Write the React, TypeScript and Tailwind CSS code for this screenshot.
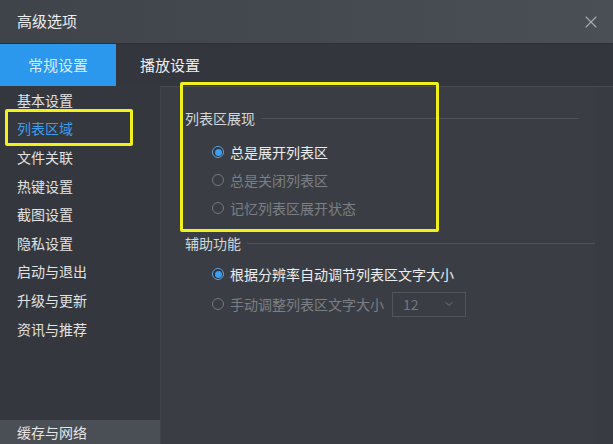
import { X, ChevronDown } from "lucide-react";

const menu = ["基本设置", "列表区域", "文件关联", "热键设置", "截图设置", "隐私设置", "启动与退出", "升级与更新", "资讯与推荐"];

function Radio({ on, label, dim }: { on?: boolean; label: string; dim?: boolean }) {
  return (
    <div className="flex h-[28px] items-center gap-[6px]">
      {on ? (
        <span className="grid size-[12px] place-items-center rounded-full border border-[#5aa7e8] bg-[#2e3238]"><span className="size-[7px] rounded-full bg-[#3d9ff0]" /></span>
      ) : (
        <span className="size-[12px] rounded-full border border-[#73777d]" />
      )}
      <span className={dim ? "text-[#7b7f85]" : "text-[#ececec]"}>{label}</span>
    </div>
  );
}

function Group({ title, line }: { title: string; line: string }) {
  return (
    <div className="flex h-[20px] items-center">
      <span className="text-[#d4d6d9]">{title}</span>
      <span className={`ml-[6px] h-px flex-1 bg-[#4d5259] ${line}`} />
    </div>
  );
}

export default function App() {
  return (
    <div className="relative h-[444px] w-[613px] overflow-hidden bg-[#3a3e44] text-[14px] font-['Noto_Sans_CJK_SC',sans-serif]">
      <div className="flex h-[44px] items-center justify-between border-b border-[#2c2f34] bg-gradient-to-r from-[#3f434a] to-[#4a4e55] pl-[17px] pr-[12px]">
        <span className="text-[15px] text-[#eeeeee]">高级选项</span>
        <X size={20} strokeWidth={1.3} className="text-[#a9adb3]" />
      </div>
      <div className="flex h-[42px] bg-[#33363c]">
        <div className="grid w-[116px] place-items-center bg-[#2b98ee] text-[15px] text-[#d9ecff]">常规设置</div>
        <div className="flex w-[115px] items-center pl-[24px] text-[15px] text-[#eeeeee]">播放设置</div>
      </div>
      <div className="flex h-[358px]">
        <div className="flex w-[160px] flex-col justify-between bg-[#34373d]">
          <div className="flex flex-col">
            {menu.map((m, i) => (
              <div key={m} className={`flex h-[28.6px] items-center pl-[17px] ${i === 1 ? "text-[#3d9eec]" : "text-[#e2e2e2]"}`}>{m}</div>
            ))}
          </div>
          <div className="flex h-[24px] items-center bg-[#4a4e55] pl-[17px] text-[#e6e6e6]">缓存与网络</div>
        </div>
        <div className="flex flex-1 border-t border-[#474b52]">
          <div className="flex flex-1 flex-col border-l border-[#3f434a] pl-[24px] pt-[21px]">
            <Group title="列表区展现" line="mr-[16px]" />
            <div className="mt-[10px] flex flex-col pl-[27px]">
              <Radio on label="总是展开列表区" />
              <Radio dim label="总是关闭列表区" />
              <Radio dim label="记忆列表区展开状态" />
            </div>
            <div className="mt-[11px]"><Group title="辅助功能" line="" /></div>
            <div className="mt-[6px] flex flex-col pl-[27px]">
              <div className="flex h-[30px] items-center"><Radio on label="根据分辨率自动调节列表区文字大小" /></div>
              <div className="flex h-[30px] items-center gap-[8px]">
                <Radio dim label="手动调整列表区文字大小" />
                <div className="flex h-[25px] w-[74px] items-center justify-between border border-[#50545b] px-[10px] text-[#73777d]">
                  <span>12</span>
                  <ChevronDown size={12} />
                </div>
              </div>
            </div>
          </div>
          <div className="w-[18px] bg-[#383c42]" />
        </div>
      </div>
      <div className="absolute left-[5px] top-[109px] h-[37px] w-[128px] rounded-[2px] border-[3px] border-[#f2f21a]" />
      <div className="absolute left-[180px] top-[82px] h-[150px] w-[259px] rounded-[2px] border-[3px] border-[#f2f21a]" />
    </div>
  );
}
